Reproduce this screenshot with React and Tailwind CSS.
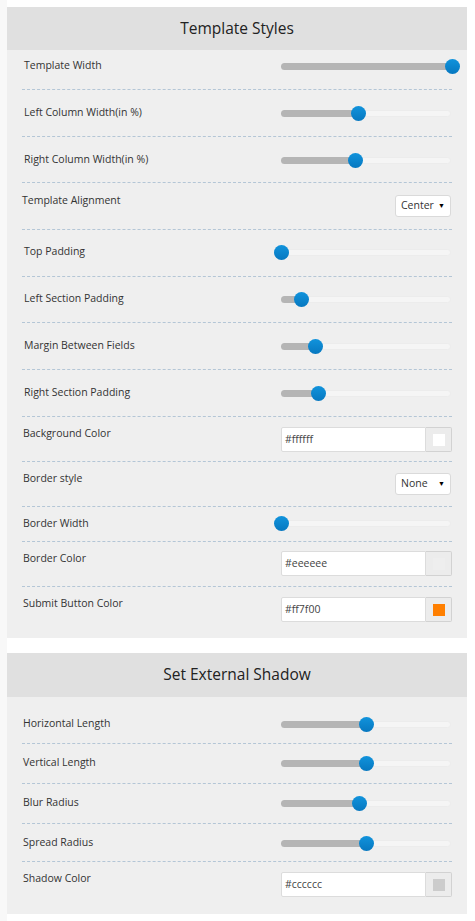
import React from 'react';

// slider: pos is the thumb centre in px from track start (track is 170px)
const Slider = ({ pos, className }) => (
  <div className={`relative h-[16px] w-[170px] ${className}`}>
    <div className="absolute left-0 right-0 top-[5px] h-[7px] rounded-full bg-[#f5f5f5] border border-[#ececec]" />
    <div className="absolute left-0 top-[5px] h-[7px] rounded-l-full bg-[#b5b5b5]" style={{ width: pos }} />
    <div
      className="absolute top-[1px] h-[15px] w-[15px] rounded-full bg-gradient-to-b from-[#1193dc] to-[#0778c0]"
      style={{ left: pos - 7.5 }}
    />
  </div>
);

const ColorInput = ({ value, swatch, className }) => (
  <div className={`flex h-[25px] w-[171px] ${className}`}>
    <div className="flex-1 flex items-center pl-[3px] bg-white border border-[#dcdcdc] rounded-l-[2px] text-[10.5px] text-[#444]">
      {value}
    </div>
    <div className="w-[26px] flex items-center justify-center bg-[#ececec] border border-l-0 border-[#d2d2d2] rounded-r-[2px]">
      {swatch}
    </div>
  </div>
);

const Select = ({ value, className }) => (
  <div
    className={`ml-auto mr-[1px] flex items-center justify-between h-[22px] w-[56px] pl-[5px] pr-[5px] bg-white border border-[#dadada] rounded-[3px] text-[10.5px] text-[#333] ${className}`}
  >
    <span>{value}</span>
    <span className="text-[7px] text-black">▼</span>
  </div>
);

const Row = ({ label, h, lbl, last, children }) => (
  <div>
    <div className={`flex items-start ${h}`}>
      <div className={`w-[259px] text-[10.5px] leading-[16px] text-[#333] ${lbl}`}>{label}</div>
      <div className="flex-1 flex">{children}</div>
    </div>
    {!last && <div className="border-t border-dashed border-[#b4c6d6]" />}
  </div>
);

const Panel = ({ title, hh, children }) => (
  <div className="w-[460px] bg-[#efefef]">
    <div className={`flex items-center justify-center bg-[#e0e0e0] text-[15.5px] text-[#222] ${hh}`}>{title}</div>
    <div className="px-[15px]">{children}</div>
  </div>
);

export default function App() {
  return (
    <div className="min-h-[921px] bg-white border-l-[7px] border-[#f8f8f8] pt-[7px] font-['Open_Sans','Noto_Sans',sans-serif]">
      <Panel title="Template Styles" hh="h-[43px]">
        <Row label="Template Width" h="h-[39px]" lbl="mt-[7px] pl-[2px]">
          <Slider pos={171} className="mt-[8px]" />
        </Row>
        <Row label="Left Column Width(in %)" h="h-[46px]" lbl="mt-[14px] pl-[2px]">
          <Slider pos={77} className="mt-[15px]" />
        </Row>
        <Row label="Right Column Width(in %)" h="h-[45px]" lbl="mt-[14px] pl-[2px]">
          <Slider pos={74} className="mt-[15px]" />
        </Row>
        <Row label="Template Alignment" h="h-[46px]" lbl="mt-[9px]">
          <Select value="Center" className="mt-[12px]" />
        </Row>
        <Row label="Top Padding" h="h-[46px]" lbl="mt-[13px] pl-[2px]">
          <Slider pos={0} className="mt-[14px]" />
        </Row>
        <Row label="Left Section Padding" h="h-[45px]" lbl="mt-[13px] pl-[2px]">
          <Slider pos={20} className="mt-[14px]" />
        </Row>
        <Row label="Margin Between Fields" h="h-[46px]" lbl="mt-[14px] pl-[2px]">
          <Slider pos={34} className="mt-[15px]" />
        </Row>
        <Row label="Right Section Padding" h="h-[46px]" lbl="mt-[14px] pl-[2px]">
          <Slider pos={37} className="mt-[15px]" />
        </Row>
        <Row label="Background Color" h="h-[44px]" lbl="mt-[8px] pl-[1px]">
          <ColorInput value="#ffffff" className="mt-[10px]" swatch={<div className="w-[12px] h-[12px] bg-white" />} />
        </Row>
        <Row label="Border style" h="h-[44px]" lbl="mt-[8px] pl-[1px]">
          <Select value="None" className="mt-[11px]" />
        </Row>
        <Row label="Border Width" h="h-[34px]" lbl="mt-[8px] pl-[1px]">
          <Slider pos={0} className="mt-[8px]" />
        </Row>
        <Row label="Border Color" h="h-[44px]" lbl="mt-[8px] pl-[1px]">
          <ColorInput value="#eeeeee" className="mt-[9px]" swatch={<div className="w-[12px] h-[12px] bg-[#eeeeee]" />} />
        </Row>
        <Row label="Submit Button Color" h="h-[51px]" lbl="mt-[8px] pl-[1px]" last>
          <ColorInput value="#ff7f00" className="mt-[10px]" swatch={<div className="w-[12px] h-[12px] bg-[#ff7f00]" />} />
        </Row>
      </Panel>
      <div className="h-[15px]" />
      <Panel title="Set External Shadow" hh="h-[44px]">
        <Row label="Horizontal Length" h="h-[46px]" lbl="mt-[18px] pl-[1px]">
          <Slider pos={85} className="mt-[19px]" />
        </Row>
        <Row label="Vertical Length" h="h-[39px]" lbl="mt-[10px] pl-[1px]">
          <Slider pos={85} className="mt-[11px]" />
        </Row>
        <Row label="Blur Radius" h="h-[39px]" lbl="mt-[10px] pl-[1px]">
          <Slider pos={78} className="mt-[11px]" />
        </Row>
        <Row label="Spread Radius" h="h-[37px]" lbl="mt-[10px] pl-[1px]">
          <Slider pos={85} className="mt-[11px]" />
        </Row>
        <Row label="Shadow Color" h="h-[52px]" lbl="mt-[8px] pl-[1px]" last>
          <ColorInput value="#cccccc" className="mt-[10px]" swatch={<div className="w-[12px] h-[12px] bg-[#cccccc]" />} />
        </Row>
      </Panel>
    </div>
  );
}
